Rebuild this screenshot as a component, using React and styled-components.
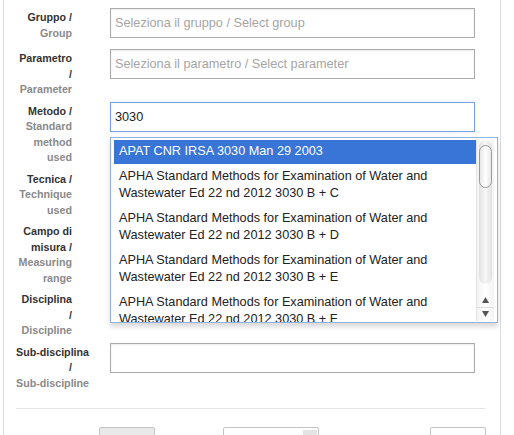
import React from 'react'
import styled, { createGlobalStyle } from 'styled-components'

const GlobalStyle = createGlobalStyle`
  html, body {
    margin: 0;
    padding: 0;
    overflow: hidden;
    background: #fff;
  }
  body {
    font-family: "Liberation Sans", Arial, Helvetica, sans-serif;
  }
`

const Panel = styled.div`
  margin-left: 3px;
  width: 498px;
  height: 480px;
  border-left: 1px solid #ddd;
  border-right: 1px solid #ddd;
  padding: 8px 14px 0 12px;
  box-sizing: border-box;
`

const Row = styled.div`
  display: flex;
  align-items: flex-start;
  min-height: 37px;
  margin-bottom: 4px;
`

const Label = styled.div`
  width: 56px;
  flex: none;
  padding-top: 2px;
  text-align: right;
  font-size: 10.7px;
  font-weight: bold;
  line-height: 15.5px;
`

const Line = styled.div`
  white-space: nowrap;
  color: ${p => (p.$en ? '#8a8a8a' : '#333')};
`

const Field = styled.div`
  position: relative;
  margin-left: 38px;
  width: 365px;
`

const Input = styled.div`
  height: 30px;
  box-sizing: border-box;
  border: 1px solid ${p => (p.$focus ? '#7aa3dc' : '#aaa')};
  box-shadow: ${p => (p.$focus ? '0 0 2px rgba(88,151,251,0.35)' : 'inset 0 1px 2px rgba(0,0,0,0.08)')};
  padding: 0 4px;
  display: flex;
  align-items: center;
  font-size: 12.7px;
  color: ${p => (p.$placeholder ? '#a5a5a5' : '#222')};
  background: #fff;
`

const Dropdown = styled.div`
  position: absolute;
  top: 35px;
  left: 0;
  width: 388px;
  height: 186px;
  box-sizing: border-box;
  border: 1px solid #8fb2e0;
  background: #fff;
  box-shadow: 0 4px 5px rgba(0, 0, 0, 0.15);
  padding: 2px 0 0 3px;
  overflow: hidden;
  z-index: 10;
`

const List = styled.ul`
  list-style: none;
  margin: 0;
  padding: 0;
  width: 363px;
`

const Item = styled.li`
  padding: 3.5px 5px;
  font-size: 12.7px;
  line-height: 17.5px;
  color: ${p => (p.$active ? '#fff' : '#222')};
  background: ${p => (p.$active ? '#3875d7' : 'transparent')};
`

const Scrollbar = styled.div`
  position: absolute;
  top: 1px;
  bottom: 1px;
  right: 3px;
  width: 17px;
  display: flex;
  flex-direction: column;
  background: linear-gradient(to right, #f3f3f3, #fff 50%, #f3f3f3);
  border-left: 1px solid #e4e4e4;
`

const Groove = styled.div`
  flex: 1;
  margin: 1px 2px 10px;
  border-radius: 7px;
  background: linear-gradient(to right, #e2e2e2, #f7f7f7 50%, #e2e2e2);
  padding-top: 5px;
`

const Thumb = styled.div`
  height: 43px;
  box-sizing: border-box;
  border: 1px solid #9a9a9a;
  border-radius: 7px;
  background: linear-gradient(to right, #e8e8e8, #fff 50%, #e8e8e8);
`

const Arrow = styled.div`
  height: 13px;
  display: flex;
  align-items: center;
  justify-content: center;
  border-top: ${p => (p.$down ? '1px solid #ddd' : 'none')};
`

const Separator = styled.div`
  margin-top: 17px;
  height: 1px;
  background: #e6e6e6;
`

const Buttons = styled.div`
  display: flex;
  margin-top: 18px;
`

const Button = styled.div`
  height: 30px;
  width: ${p => p.$w}px;
  margin-left: ${p => p.$ml}px;
  box-sizing: border-box;
  border: 1px solid #c4c4c4;
  border-radius: 2px;
  background: ${p => (p.$gray ? '#e9e9e9' : '#fff')};
  display: flex;
  justify-content: flex-end;
`

const Addon = styled.div`
  width: 14px;
  margin: 2px 1px 0 0;
  height: 10px;
  background: #e4e4e4;
`

const rows = [
  { it: ['Gruppo /'], en: ['Group'], placeholder: 'Seleziona il gruppo / Select group' },
  { it: ['Parametro', '/'], en: ['Parameter'], placeholder: 'Seleziona il parametro / Select parameter' },
  { it: ['Metodo /'], en: ['Standard', 'method', 'used'], value: '3030', focus: true },
  { it: ['Tecnica /'], en: ['Technique', 'used'], hidden: true },
  { it: ['Campo di', 'misura /'], en: ['Measuring', 'range'], hidden: true },
  { it: ['Disciplina', '/'], en: ['Discipline'], hidden: true },
  { it: ['Sub-disciplina', '/'], en: ['Sub-discipline'], value: '' },
]

const options = [
  ['APAT CNR IRSA 3030 Man 29 2003'],
  ['APHA Standard Methods for Examination of Water and', 'Wastewater Ed 22 nd 2012 3030 B + C'],
  ['APHA Standard Methods for Examination of Water and', 'Wastewater Ed 22 nd 2012 3030 B + D'],
  ['APHA Standard Methods for Examination of Water and', 'Wastewater Ed 22 nd 2012 3030 B + E'],
  ['APHA Standard Methods for Examination of Water and', 'Wastewater Ed 22 nd 2012 3030 B + F'],
]

function Triangle({ down }) {
  return (
    <svg width="7" height="6" viewBox="0 0 7 6">
      <path d={down ? 'M0 0 L7 0 L3.5 6 Z' : 'M0 6 L7 6 L3.5 0 Z'} fill="#555" />
    </svg>
  )
}

function MethodDropdown() {
  return (
    <Dropdown>
      <List>
        {options.map((lines, i) => (
          <Item key={i} $active={i === 0}>
            {lines.map((l, j) => <div key={j}>{l}</div>)}
          </Item>
        ))}
      </List>
      <Scrollbar>
        <Groove>
          <Thumb />
        </Groove>
        <Arrow><Triangle /></Arrow>
        <Arrow $down><Triangle down /></Arrow>
      </Scrollbar>
    </Dropdown>
  )
}

export default function App() {
  return (
    <>
      <GlobalStyle />
      <Panel>
        {rows.map((r, i) => (
          <Row key={i}>
            <Label>
              {r.it.map(t => <Line key={t}>{t}</Line>)}
              {r.en.map(t => <Line key={t} $en>{t}</Line>)}
            </Label>
            {!r.hidden && (
              <Field>
                <Input $focus={r.focus} $placeholder={!!r.placeholder}>
                  {r.placeholder || r.value}
                </Input>
                {r.focus && <MethodDropdown />}
              </Field>
            )}
          </Row>
        ))}
        <Separator />
        <Buttons>
          <Button $w={56} $ml={83} $gray />
          <Button $w={97} $ml={68}><Addon /></Button>
          <Button $w={56} $ml={111} />
        </Buttons>
      </Panel>
    </>
  )
}
